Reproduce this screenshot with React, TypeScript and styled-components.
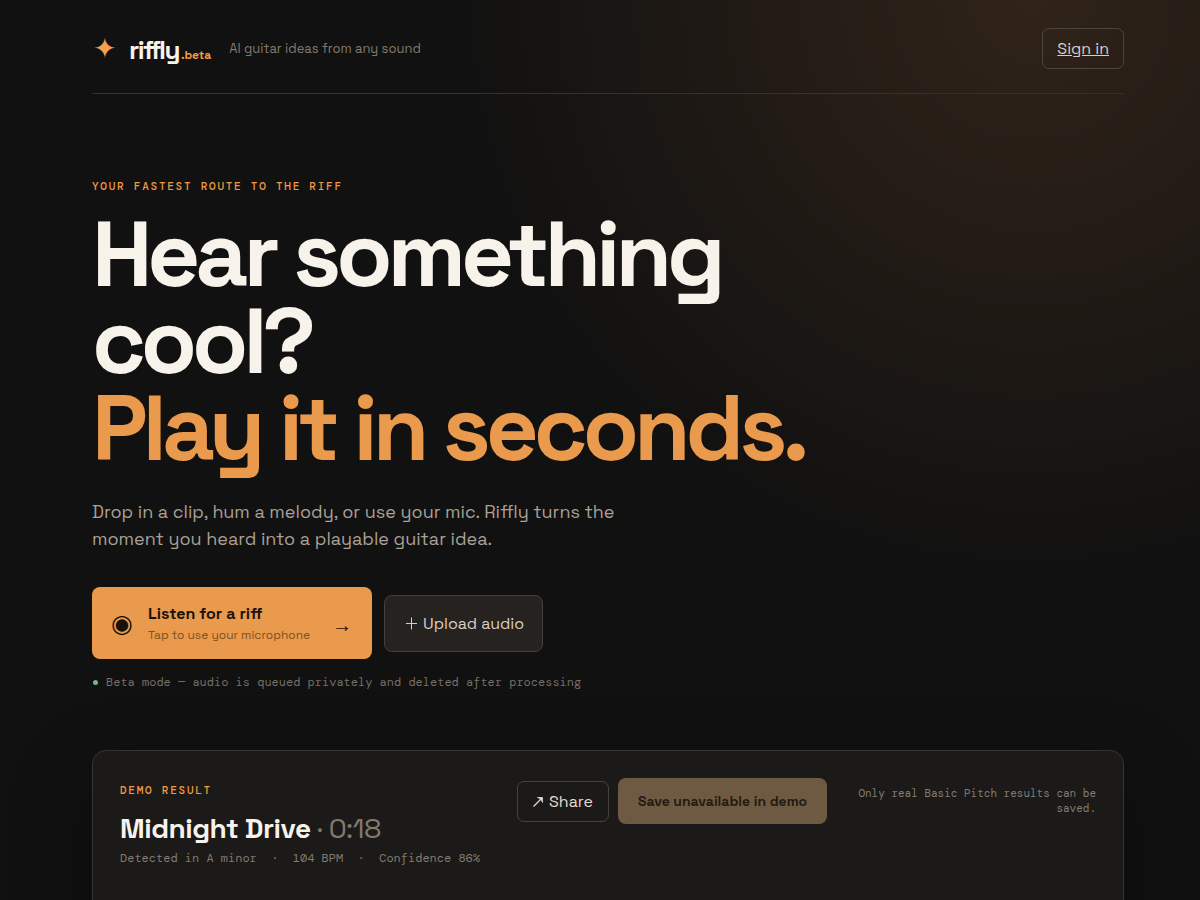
import React from "react";
import styled, { createGlobalStyle } from "styled-components";

const sans = `"Space Grotesk", Inter, "Liberation Sans", sans-serif`;
const mono = `"DM Mono", "Liberation Mono", monospace`;

const GlobalStyle = createGlobalStyle`
  *, *::before, *::after { box-sizing: border-box; }
  body {
    margin: 0;
    background: #111111;
    color: #f7f3ea;
    font-family: ${sans};
    font-size: 16px;
  }
  button, input { font: inherit; }
`;

const Page = styled.div`
  min-height: 100vh;
  padding: 0 76px 48px 92px;
  background: radial-gradient(circle at 86% 0, #302319 0, #111111 580px);
`;

const Header = styled.header`
  display: flex;
  align-items: center;
  padding: 28px 0 24px;
  border-bottom: 1px solid #34312e;
`;

const Brand = styled.a`
  display: flex;
  align-items: center;
  gap: 12px;
  color: inherit;
  text-decoration: none;
`;

const Spark = styled.span`
  width: 25px;
  padding-bottom: 2px;
  color: #f5a04e;
  font-size: 28px;
  line-height: 32px;
  text-align: center;
`;

const Wordmark = styled.span`
  padding-top: 2px;
  font-size: 26px;
  font-weight: 700;
  line-height: 32px;
  letter-spacing: -0.06em;
`;

const BetaTag = styled.small`
  margin-left: 2px;
  color: #f09a45;
  font-size: 12px;
  font-weight: 700;
  line-height: 12px;
  letter-spacing: 0;
`;

const Tagline = styled.span`
  margin-left: 18px;
  color: #827a70;
  font-size: 13px;
`;

const SignIn = styled.a`
  margin-left: auto;
  padding: 10px 14px;
  border: 1px solid #4b443e;
  border-radius: 7px;
  color: #d8cfc2;
  line-height: 19px;
`;

const Hero = styled.section`
  padding: 84px 0 60px;
`;

const Eyebrow = styled.p`
  margin: 0;
  color: #f09a45;
  font-family: ${mono};
  font-size: 11px;
  font-weight: 500;
  line-height: 16px;
  letter-spacing: 0.16em;
  text-transform: uppercase;
`;

const Headline = styled.h1`
  max-width: 780px;
  margin: 17px 0 26px;
  font-size: 92px;
  font-weight: 700;
  line-height: 87px;
  letter-spacing: -0.055em;
`;

const Accent = styled.span`
  display: block;
  color: #ea9a4c;
`;

const Lead = styled.p`
  max-width: 560px;
  margin: 0 0 35px;
  color: #aaa095;
  font-size: 18px;
  line-height: 27px;
`;

const Actions = styled.div`
  display: flex;
  align-items: center;
  gap: 12px;
`;

const ListenButton = styled.button`
  display: flex;
  align-items: center;
  gap: 16px;
  width: 280px;
  height: 72px;
  padding: 0 20px;
  border: 0;
  border-radius: 8px;
  background: #ea9a4c;
  color: #17110c;
  text-align: left;
`;

const RecordIcon = styled.span`
  display: flex;
  justify-content: center;
  width: 20px;
  font-size: 25px;
  line-height: 32px;
`;

const ListenText = styled.span`
  display: grid;
  flex: 1;
  padding-top: 2px;
  font-weight: 700;
  line-height: 22px;
  white-space: nowrap;
`;

const ListenHint = styled.small`
  color: #80501f;
  font-size: 12px;
  font-weight: 400;
  line-height: 20px;
`;

const ArrowIcon = styled.span`
  padding-top: 4px;
  font-family: "Liberation Sans", sans-serif;
  font-size: 20px;
  line-height: 24px;
`;

const UploadButton = styled.button`
  display: flex;
  align-items: center;
  gap: 5px;
  height: 57px;
  padding: 0 18px 0 20px;
  border: 1px solid #45403b;
  border-radius: 8px;
  background: #26221f;
  color: #d8cfc2;
`;

const PlusIcon = styled.svg`
  width: 13px;
  height: 13px;
`;

const PrivacyNote = styled.p`
  display: flex;
  align-items: center;
  gap: 8px;
  margin: 15px 0 0;
  color: #756e66;
  font-family: ${mono};
  font-size: 12px;
  line-height: 16px;
`;

const StatusDot = styled.i`
  width: 5px;
  height: 5px;
  margin-left: 1px;
  border-radius: 50%;
  background: #73b487;
`;

const ResultCard = styled.section`
  display: flex;
  align-items: flex-start;
  min-height: 320px;
  padding: 27px;
  border: 1px solid #363431;
  border-radius: 14px;
  background: #1b1a18;
  box-shadow: 0 30px 80px rgba(0, 0, 0, 0.4);
`;

const ResultInfo = styled.div`
  flex: none;
  padding-top: 4px;
`;

const ResultTitle = styled.h2`
  margin: 12px 0 3px;
  font-size: 28px;
  font-weight: 700;
  line-height: 36px;
  letter-spacing: -0.5px;
`;

const Duration = styled.span`
  color: #827a70;
  font-weight: 400;
`;

const ResultMeta = styled.p`
  margin: 0;
  color: #827a70;
  font-family: ${mono};
  font-size: 12px;
  line-height: 18px;
  white-space: pre;
`;

const ResultActions = styled.div`
  display: flex;
  flex: 1;
  align-items: center;
  gap: 9px;
  margin-left: 37px;
`;

const ShareButton = styled.button`
  display: flex;
  align-items: center;
  gap: 5px;
  height: 41px;
  padding: 0 15px;
  border: 1px solid #45423e;
  border-radius: 7px;
  background: transparent;
  color: #e5dccf;
`;

const ShareIcon = styled.svg`
  width: 11px;
  height: 11px;
`;

const SaveButton = styled.button`
  height: 46px;
  padding: 0 20px;
  border: 0;
  border-radius: 8px;
  background: #6e5a42;
  color: #251a12;
  font-size: 14px;
  font-weight: 600;
  white-space: nowrap;
`;

const SaveNote = styled.p`
  flex: 1;
  margin: 0 0 0 20px;
  color: #827a70;
  font-family: ${mono};
  font-size: 11px;
  line-height: 15px;
  text-align: right;
`;

export default function App() {
  return (
    <>
      <GlobalStyle />
      <Page>
        <Header>
          <Brand href="#">
            <Spark aria-hidden="true">✦</Spark>
            <Wordmark>
              riffly<BetaTag>.beta</BetaTag>
            </Wordmark>
          </Brand>
          <Tagline>AI guitar ideas from any sound</Tagline>
          <SignIn href="#">Sign in</SignIn>
        </Header>
        <main>
          <Hero>
            <Eyebrow>Your fastest route to the riff</Eyebrow>
            <Headline>
              Hear something cool?
              <Accent>Play it in seconds.</Accent>
            </Headline>
            <Lead>
              Drop in a clip, hum a melody, or use your mic. Riffly turns the
              moment you heard into a playable guitar idea.
            </Lead>
            <Actions>
              <ListenButton type="button">
                <RecordIcon aria-hidden="true">◉</RecordIcon>
                <ListenText>
                  Listen for a riff
                  <ListenHint>Tap to use your microphone</ListenHint>
                </ListenText>
                <ArrowIcon aria-hidden="true">→</ArrowIcon>
              </ListenButton>
              <UploadButton type="button">
                <PlusIcon viewBox="0 0 13 13" stroke="currentColor" aria-hidden="true">
                  <path d="M6.5 0.5V12.5M1 6.5H12" />
                </PlusIcon>
                Upload audio
              </UploadButton>
            </Actions>
            <PrivacyNote>
              <StatusDot />
              Beta mode — audio is queued privately and deleted after processing
            </PrivacyNote>
          </Hero>
          <ResultCard>
            <ResultInfo>
              <Eyebrow>Demo result</Eyebrow>
              <ResultTitle>
                Midnight Drive <Duration>· 0:18</Duration>
              </ResultTitle>
              <ResultMeta>{"Detected in A minor  ·  104 BPM  ·  Confidence 86%"}</ResultMeta>
            </ResultInfo>
            <ResultActions>
              <ShareButton type="button">
                <ShareIcon viewBox="0 0 11 11" fill="none" stroke="currentColor" strokeWidth="1.2" aria-hidden="true">
                  <path d="M0.5 10.5L9 2" />
                  <path d="M4.5 1.5H9.5V6.5L8 3Z" fill="currentColor" strokeWidth="0.8" />
                </ShareIcon>
                Share
              </ShareButton>
              <SaveButton type="button" disabled>
                Save unavailable in demo
              </SaveButton>
              <SaveNote>Only real Basic Pitch results can be saved.</SaveNote>
            </ResultActions>
          </ResultCard>
        </main>
      </Page>
    </>
  );
}
